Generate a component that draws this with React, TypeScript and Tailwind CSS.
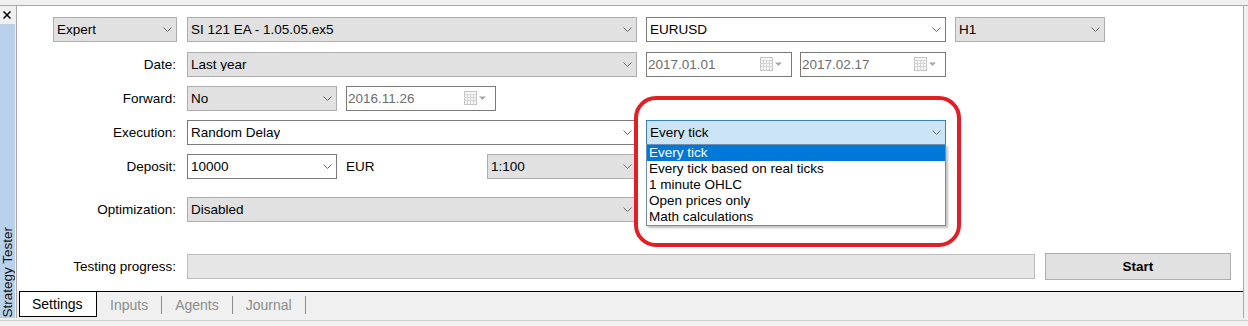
import React from 'react'

type Tone = 'gray' | 'white' | 'focus'

function Chevron() {
    return (
        <svg width="9" height="5" viewBox="0 0 9 5" className="shrink-0">
            <path d="M0.5 0.5L4.5 4.5L8.5 0.5" fill="none" stroke="#6a6a6a" strokeWidth="1" />
        </svg>
    )
}

function CalendarIcon() {
    return (
        <svg width="23" height="15" viewBox="0 0 23 15" className="shrink-0">
            <rect x="0.5" y="0.5" width="12" height="13" fill="#f6f6f6" stroke="#c4c4c4" />
            <path
                d="M0.5 3.5H12.5M0.5 6.5H12.5M0.5 9.5H12.5M3.5 3.5V13.5M6.5 3.5V13.5M9.5 3.5V13.5"
                stroke="#d6d6d6"
            />
            <path d="M15 5.5H22L18.5 9Z" fill="#a8a8a8" />
        </svg>
    )
}

function Combo({ value, w, tone = 'gray' }: { value: string; w: string; tone?: Tone }) {
    const look =
        tone === 'gray'
            ? 'bg-[#e1e1e1] border-[#adadad]'
            : tone === 'white'
            ? 'bg-white border-[#7a7a7a]'
            : 'bg-[#cce4f7] border-[#3c7fb1]'
    return (
        <div className={`${w} h-[25px] shrink-0 flex items-center justify-between border pl-[3px] pr-[4px] ${look}`}>
            <span className="truncate">{value}</span>
            <Chevron />
        </div>
    )
}

function DateBox({ value, w }: { value: string; w: string }) {
    return (
        <div className={`${w} h-[25px] shrink-0 flex items-center justify-between border border-[#7a7a7a] bg-white pl-[1px] pr-[8px] text-[#6d6d6d]`}>
            <span>{value}</span>
            <CalendarIcon />
        </div>
    )
}

function Label({ text }: { text: string }) {
    return <div className="w-[160px] shrink-0 text-right pr-px">{text}</div>
}

const modes = ['Every tick', 'Every tick based on real ticks', '1 minute OHLC', 'Open prices only', 'Math calculations']

export default function App() {
    return (
        <div className="relative w-[1248px] h-[326px] overflow-hidden bg-[#f0f0f0] flex flex-col text-[13.5px] text-black font-['Liberation_Sans',Arial,sans-serif] leading-none">
            <div className="h-[5px] shrink-0" />
            <div className="h-px shrink-0 bg-[#a9a9a9]" />
            <div className="flex h-[312px] shrink-0">
                {/* side caption */}
                <div className="w-[16px] shrink-0 flex flex-col">
                    <div className="h-[18px] shrink-0 flex items-center pl-[3px]">
                        <svg width="8" height="8" viewBox="0 0 8 8">
                            <path d="M0.5 0.5L7.5 7.5M7.5 0.5L0.5 7.5" stroke="#000" strokeWidth="1.5" />
                        </svg>
                    </div>
                    <div className="w-[15px] flex-1 bg-[#b9d1ea] flex items-end justify-center overflow-hidden">
                        <span className="[writing-mode:vertical-rl] rotate-180 text-[13.5px] whitespace-nowrap pb-[2px] text-[#101010]">
                            Strategy Tester
                        </span>
                    </div>
                </div>

                {/* main frame */}
                <div className="w-[1228px] shrink-0 border-x border-[#a9a9a9] flex flex-col">
                    <div className="h-[285px] shrink-0 bg-white flex flex-col">
                        <div className="mt-[11px] flex items-center">
                            <div className="w-[36px] shrink-0" />
                            <Combo value="Expert" w="w-[124px]" />
                            <div className="w-[10px] shrink-0" />
                            <Combo value="SI 121 EA - 1.05.05.ex5" w="w-[450px]" />
                            <div className="w-[9px] shrink-0" />
                            <Combo value="EURUSD" w="w-[300px]" tone="white" />
                            <div className="w-[9px] shrink-0" />
                            <Combo value="H1" w="w-[150px]" />
                        </div>

                        <div className="mt-[10px] flex items-center">
                            <Label text="Date:" />
                            <div className="w-[10px] shrink-0" />
                            <Combo value="Last year" w="w-[450px]" />
                            <div className="w-[9px] shrink-0" />
                            <DateBox value="2017.01.01" w="w-[146px]" />
                            <div className="w-[8px] shrink-0" />
                            <DateBox value="2017.02.17" w="w-[146px]" />
                        </div>

                        <div className="mt-[9px] flex items-center">
                            <Label text="Forward:" />
                            <div className="w-[10px] shrink-0" />
                            <Combo value="No" w="w-[150px]" />
                            <div className="w-[9px] shrink-0" />
                            <DateBox value="2016.11.26" w="w-[150px]" />
                        </div>

                        <div className="mt-[9px] flex items-center">
                            <Label text="Execution:" />
                            <div className="w-[10px] shrink-0" />
                            <Combo value="Random Delay" w="w-[450px]" tone="white" />
                            <div className="w-[9px] shrink-0" />
                            <Combo value="Every tick" w="w-[300px]" tone="focus" />
                        </div>

                        <div className="mt-[9px] flex items-center">
                            <Label text="Deposit:" />
                            <div className="w-[10px] shrink-0" />
                            <Combo value="10000" w="w-[150px]" tone="white" />
                            <div className="w-[150px] shrink-0 pl-[9px]">EUR</div>
                            <Combo value="1:100" w="w-[150px]" />
                        </div>

                        <div className="mt-[18px] flex items-center">
                            <Label text="Optimization:" />
                            <div className="w-[10px] shrink-0" />
                            <Combo value="Disabled" w="w-[450px]" />
                        </div>

                        <div className="mt-[31px] flex items-center h-[27px]">
                            <Label text="Testing progress:" />
                            <div className="w-[10px] shrink-0" />
                            <div className="w-[848px] h-[25px] shrink-0 bg-[#e6e6e6] border border-[#bcbcbc]" />
                            <div className="w-[10px] shrink-0" />
                            <div className="w-[186px] h-[27px] shrink-0 bg-[#e1e1e1] border border-[#adadad] flex items-center justify-center font-bold">
                                Start
                            </div>
                        </div>
                    </div>
                    <div className="h-px shrink-0 bg-black ml-[2px]" />
                    <div className="flex-1 flex items-start text-[14px]">
                        <div className="ml-[2px] h-[25px] w-[78px] bg-white border-x border-b border-black flex items-center pl-[12px]">
                            Settings
                        </div>
                        {['Inputs', 'Agents', 'Journal'].map((t) => (
                            <div key={t} className="flex items-center h-[25px]">
                                <span className="px-[13px] text-[#8c8c8c]">{t}</span>
                                <div className="w-px h-[18px] bg-[#8c8c8c]" />
                            </div>
                        ))}
                    </div>
                </div>
            </div>
            <div className="h-px shrink-0 bg-[#cfcfcf] mt-[2px]" />

            {/* open list of the focused combo */}
            <div className="absolute left-[646px] top-[144px] w-[300px] h-[82px] bg-white border border-[#6e8fb0] shadow-[2px_2px_2px_rgba(0,0,0,0.25)] flex flex-col">
                {modes.map((m, i) => (
                    <div
                        key={m}
                        className={`h-[16px] flex items-center pl-[2px] ${i === 0 ? 'bg-[#0078d7] text-white' : ''}`}
                    >
                        {m}
                    </div>
                ))}
            </div>

            {/* annotation */}
            <div className="absolute left-[634px] top-[96px] w-[327px] h-[151px] border-4 border-[#e31e24] rounded-[22px]" />
        </div>
    )
}
